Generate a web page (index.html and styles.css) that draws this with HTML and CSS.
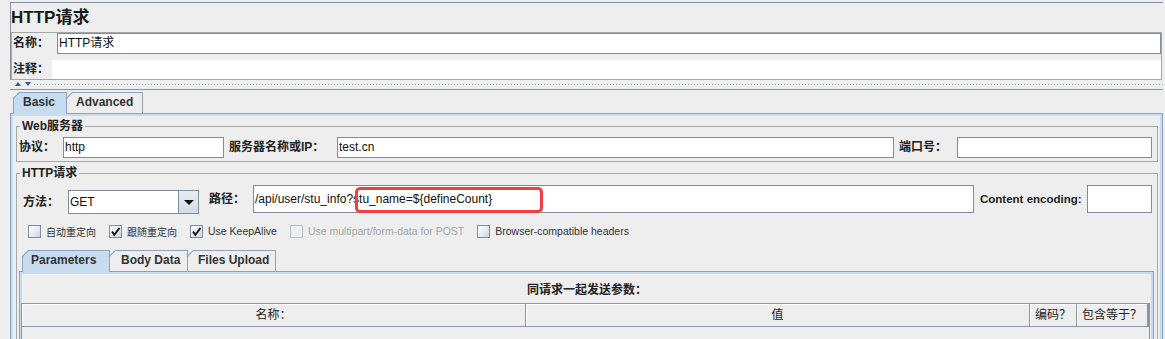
FILE: index.html
```html
<!DOCTYPE html>
<html lang="zh-CN">
<head>
<meta charset="utf-8">
<title>HTTP请求</title>
<link rel="stylesheet" href="styles.css">
</head>
<body>
<div class="top">
  <div class="title">HTTP请求</div>
  <div class="namepanel">
    <div class="nrow">
      <span class="lbl nlbl">名称：</span>
      <div class="field namefield">HTTP请求</div>
    </div>
    <div class="nrow2">
      <span class="lbl clbl">注释：</span>
      <div class="comment"></div>
    </div>
  </div>
</div>
<div class="splitter">
  <span class="arr up"></span>
  <span class="arr down"></span>
  <span class="dots"></span>
</div>
<div class="main">
  <div class="tabs">
    <div class="tab sel t-basic"><span>Basic</span></div>
    <div class="tab t-adv"><span>Advanced</span></div>
  </div>
  <div class="tabpanel">
    <fieldset class="group">
      <legend>Web服务器</legend>
      <div class="row">
        <span class="lbl l-proto">协议：</span>
        <div class="field f-proto">http</div>
        <span class="lbl l-server">服务器名称或IP：</span>
        <div class="field f-server">test.cn</div>
        <span class="lbl l-port">端口号：</span>
        <div class="field f-port"></div>
      </div>
    </fieldset>
    <fieldset class="group http">
      <legend>HTTP请求</legend>
      <div class="mrow">
        <span class="lbl l-method">方法：</span>
        <div class="combo">
          <div class="combo-val">GET</div>
          <div class="combo-btn"><span class="tri"></span></div>
        </div>
        <span class="lbl l-path">路径：</span>
        <div class="field f-path">/api/user/stu_info?stu_name=${defineCount}<span class="mark"></span></div>
        <span class="lbl l-enc">Content encoding:</span>
        <div class="field f-enc"></div>
      </div>
      <div class="cbrow">
        <label class="cbitem"><span class="cb"></span><span class="cbl cjk">自动重定向</span></label>
        <label class="cbitem"><span class="cb"><svg width="11" height="11" viewBox="0 0 11 11"><path d="M2 5.5 L4.3 8.8 L9.5 2" fill="none" stroke="#111" stroke-width="1.9"/></svg></span><span class="cbl cjk">跟随重定向</span></label>
        <label class="cbitem"><span class="cb"><svg width="11" height="11" viewBox="0 0 11 11"><path d="M2 5.5 L4.3 8.8 L9.5 2" fill="none" stroke="#111" stroke-width="1.9"/></svg></span><span class="cbl">Use KeepAlive</span></label>
        <label class="cbitem dis"><span class="cb"></span><span class="cbl">Use multipart/form-data for POST</span></label>
        <label class="cbitem"><span class="cb"></span><span class="cbl">Browser-compatible headers</span></label>
      </div>
      <div class="tabs itabs">
        <div class="tab sel t-params"><span>Parameters</span></div>
        <div class="tab t-body"><span>Body Data</span></div>
        <div class="tab t-files"><span>Files Upload</span></div>
      </div>
      <div class="ipanel">
        <div class="ptitle">同请求一起发送参数：</div>
        <div class="table">
          <div class="thead">
            <div class="th c1">名称：</div>
            <div class="th c2">值</div>
            <div class="th c3">编码？</div>
            <div class="th c4">包含等于？</div>
          </div>
        </div>
      </div>
    </fieldset>
  </div>
</div>
</body>
</html>
```
FILE: styles.css
```css
* { box-sizing: border-box; }

html, body {
  margin: 0;
  padding: 0;
}

body {
  width: 1165px;
  height: 339px;
  overflow: hidden;
  background: #eeeeee;
  color: #1f1f1f;
  font-family: "Liberation Sans", "Noto Sans CJK SC", sans-serif;
  font-size: 12px;
}

/* ---------- top area ---------- */
.top {
  margin: 2px 0 0 10px;
  width: 1153px;
  border-top: 1px solid #8593a3;
  border-left: 1px solid #8593a3;
}

.title {
  height: 29px;
  line-height: 29px;
  font-size: 17px;
  font-weight: bold;
  color: #1a1a1a;
}

.namepanel {
  width: 1151px;
  height: 48px;
  border: 1px solid #a6a6a6;
}

.lbl {
  font-weight: bold;
  font-size: 12px;
  color: #222;
  white-space: nowrap;
}

.nrow {
  display: flex;
  height: 21px;
}

.nlbl {
  width: 45px;
  padding-left: 1px;
  line-height: 21px;
}

.field {
  background: #fff;
  border: 1px solid #7f8c99;
  font-size: 12px;
  color: #111;
  white-space: nowrap;
  padding-left: 1px;
}

.namefield {
  flex: 1;
  height: 21px;
  line-height: 19px;
}

.nrow2 {
  display: flex;
  height: 19px;
  margin-top: 6px;
}

.clbl {
  width: 40px;
  padding-left: 1px;
  line-height: 19px;
}

.comment {
  flex: 1;
  background: #fff;
}

/* ---------- splitter ---------- */
.splitter {
  position: relative;
  height: 9px;
  margin-left: 10px;
  width: 1153px;
}

.arr {
  position: absolute;
  top: 2px;
  width: 0;
  height: 0;
  border-left: 3px solid transparent;
  border-right: 3px solid transparent;
}

.up {
  left: 5px;
  border-bottom: 4px solid #3c5a82;
}

.down {
  left: 15px;
  border-top: 4px solid #3c5a82;
}

.dots {
  position: absolute;
  left: 24px;
  right: 0;
  top: 4px;
  height: 1px;
  background-image:
    repeating-linear-gradient(90deg, #9fb0c4 0 1px, transparent 1px 3px);
}

/* ---------- main tabbed area ---------- */
.main {
  margin-left: 10px;
  width: 1153px;
  border-top: 1px solid #8593a3;
  padding-top: 2px;
}

.tabs {
  position: relative;
  z-index: 2;
  display: flex;
  align-items: flex-start;
  height: 21px;
  margin-left: 3px;
}

.tab {
  position: relative;
  height: 21px;
  line-height: 20px;
  font-weight: bold;
  font-size: 12px;
  color: #333;
  white-space: nowrap;
}

.tab::before {
  content: "";
  position: absolute;
  inset: 0;
  background: #8da2bc;
  clip-path: polygon(0 6px, 6px 0, 100% 0, 100% 100%, 0 100%);
}

.tab::after {
  content: "";
  position: absolute;
  inset: 1px 1px 0 1px;
  background: #eeeeee;
  clip-path: polygon(0 5.5px, 5.5px 0, 100% 0, 100% 100%, 0 100%);
}

.tab span {
  position: relative;
  z-index: 1;
}

.tab.sel {
  height: 22px;
  z-index: 1;
}

.tab.sel::after {
  background: #c8dcf0;
}

.tab + .tab {
  margin-left: -1px;
}

.t-basic { width: 54px; padding-left: 10px; }
.t-adv { width: 77px; padding-left: 10px; }
.t-params { width: 88px; padding-left: 9px; }
.t-body { width: 79px; padding-left: 12px; }
.t-files { width: 89px; padding-left: 11px; }

.tabpanel {
  height: 226px;
  overflow: hidden;
  border: 1px solid #8da2bc;
  border-bottom: none;
  box-shadow: inset 2px 2px 0 #c8dcf0, inset -2px 0 0 #c8dcf0;
  padding: 0 4px 0 5px;
}

.group {
  margin: 4px 0 0 0;
  padding: 0 5px 3px 2px;
  border: 1px solid #a8a8a8;
  min-width: 0;
}

.group legend {
  margin-left: 1px;
  padding: 0 2px;
  height: 16px;
  line-height: 16px;
  font-weight: bold;
  font-size: 12px;
  color: #222;
}

.group.http {
  margin-top: 3px;
  padding-bottom: 4px;
}

.row {
  display: flex;
  height: 21px;
  margin-top: 3px;
}

.row .lbl { line-height: 21px; }
.row .field { height: 21px; line-height: 19px; }

.l-proto { width: 44px; }
.f-proto { width: 161px; }
.l-server { width: 113px; padding-left: 5px; }
.f-server { flex: 1; }
.l-port { width: 63px; padding-left: 5px; }
.f-port { width: 195px; }

/* method row */
.mrow {
  display: flex;
  align-items: flex-start;
  height: 29px;
  margin-top: 4px;
}

.l-method {
  width: 49px;
  padding-left: 4px;
  margin-top: 5px;
  height: 24px;
  line-height: 24px;
}

.combo {
  display: flex;
  width: 131px;
  height: 24px;
  margin-top: 5px;
  border: 1px solid #7f8c99;
  background: #fff;
}

.combo-val {
  flex: 1;
  line-height: 22px;
  padding-left: 1px;
  font-size: 12px;
  color: #111;
}

.combo-btn {
  width: 20px;
  border-left: 1px solid #7f8c99;
  background: linear-gradient(#e6ecf2, #d3dde7);
  display: flex;
  align-items: center;
  justify-content: center;
}

.tri {
  width: 0;
  height: 0;
  border-left: 5px solid transparent;
  border-right: 5px solid transparent;
  border-top: 5px solid #111;
}

.l-path {
  width: 54px;
  padding-left: 10px;
  height: 28px;
  line-height: 28px;
}

.f-path {
  position: relative;
  flex: 1;
  height: 28px;
  line-height: 26px;
}

.mark {
  position: absolute;
  left: 101px;
  top: 1px;
  width: 188px;
  height: 26px;
  border: 3px solid #ee4040;
  border-radius: 5px;
}

.l-enc {
  width: 113px;
  padding-left: 6px;
  height: 28px;
  line-height: 28px;
  font-size: 11.5px;
  font-family: "Liberation Sans", sans-serif;
}

.f-enc {
  width: 65px;
  height: 28px;
}

/* checkbox row */
.cbrow {
  display: flex;
  align-items: center;
  gap: 13px;
  height: 14px;
  margin-top: 10px;
  padding-left: 9px;
}

.cbitem {
  display: flex;
  align-items: center;
}

.cb {
  width: 13px;
  height: 13px;
  border: 1px solid #7f8fa0;
  background: linear-gradient(135deg, #ffffff 0%, #e6edf4 50%, #c9d6e3 100%);
  display: flex;
  align-items: center;
  justify-content: center;
}

.cbl {
  margin-left: 5px;
  font-size: 10.5px;
  color: #333;
  white-space: nowrap;
}

.cbl.cjk {
  font-size: 10px;
}

.cbitem.dis .cb {
  border-color: #b8c0c8;
  background: #eeeeee;
}

.cbitem.dis .cbl {
  color: #a5a5a5;
}

/* inner tabs */
.itabs {
  margin-top: 12px;
  margin-left: 3px;
}

.ipanel {
  margin-right: -2px;
  height: 80px;
  border: 1px solid #8da2bc;
  border-bottom: none;
  box-shadow: inset 2px 2px 0 #c8dcf0, inset -2px 0 0 #c8dcf0;
  padding-left: 1px;
}

.ptitle {
  margin-top: 9px;
  line-height: 18px;
  text-align: center;
  font-weight: bold;
  font-size: 12px;
  color: #222;
}

.table {
  margin-top: 4px;
  width: 1129px;
  height: 50px;
  border: 1px solid #8a96a3;
  border-bottom: none;
}

.thead {
  display: flex;
  height: 23px;
}

.th {
  height: 23px;
  line-height: 22px;
  text-align: center;
  font-size: 12px;
  color: #222;
  border-right: 1px solid #8a96a3;
  border-bottom: 1px solid #8a96a3;
  box-shadow: inset 1px 1px 0 #ffffff;
}

.c1 { width: 504px; }
.c2 { width: 504px; }
.c3 { width: 47px; }
.c4 { width: 72px; border-right-width: 2px; }
```
